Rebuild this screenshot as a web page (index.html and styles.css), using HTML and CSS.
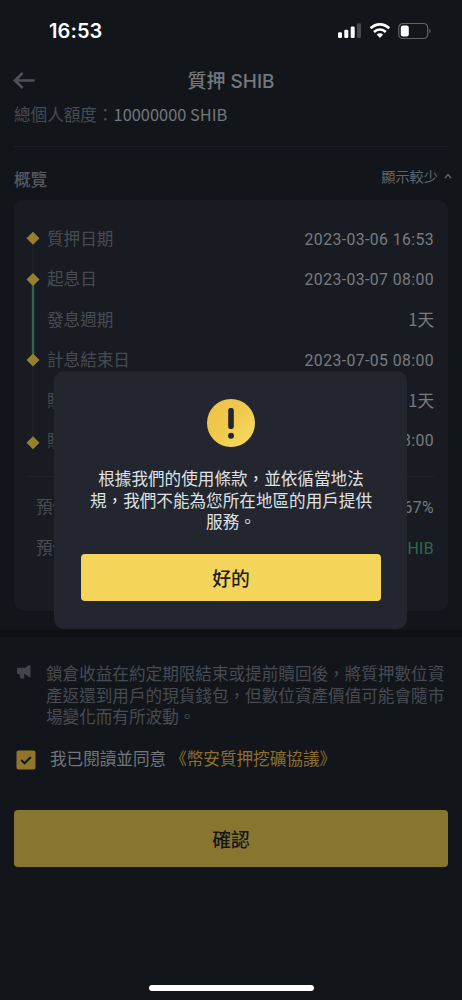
FILE: index.html
```html
<!DOCTYPE html>
<html lang="zh-Hant">
<head>
<meta charset="utf-8">
<meta name="viewport" content="width=device-width, initial-scale=1">
<title>質押 SHIB</title>
<link rel="stylesheet" href="styles.css">
</head>
<body>
<div class="screen">
  <div class="status-bar">
    <span class="clock">16:53</span>
    <svg class="status-icons" width="94" height="18" viewBox="0 0 94 18">
      <g fill="#fff">
        <rect x="1" y="10.300" width="4" height="5.700" rx="1.200"/>
        <rect x="7.300" y="7.800" width="4" height="8.200" rx="1.200"/>
        <rect x="13.700" y="4.600" width="4" height="11.400" rx="1.200"/>
        <rect x="20" y="1.300" width="4" height="14.700" rx="1.200" fill="#45484c"/>
      </g>
      <g fill="none" stroke="#fff" stroke-width="2.700">
        <path d="M33.600 6.200C39 1 46.800 1 52.200 6.200"/>
        <path d="M37 9.900C40.400 6.700 45.400 6.700 48.800 9.900"/>
      </g>
      <path d="M39.700 12.400C41.600 10.900 44.200 10.900 46.100 12.400L42.900 16Z" fill="#fff"/>
      <rect x="61.700" y="1.500" width="29" height="15" rx="4.300" fill="none" stroke="#606367" stroke-width="1.200"/>
      <rect x="63.800" y="3.500" width="8" height="11" rx="2.300" fill="#fff"/>
      <path d="M92.300 6.700C94 7.500 94 10.500 92.300 11.300Z" fill="#606367"/>
    </svg>
  </div>

  <div class="nav">
    <svg class="back" width="24" height="20" viewBox="0 0 24 20" fill="none" stroke="#4e5157" stroke-width="2.600">
      <path d="M22.500 9.500H3M10.600 2L3 9.500L10.600 17"/>
    </svg>
    <h1 class="title">質押 SHIB</h1>
  </div>

  <div class="quota">總個人額度：<span class="quota-value">10000000 SHIB</span></div>

  <div class="overview-head">
    <span class="overview-title">概覽</span>
    <span class="toggle">顯示較少
      <svg width="8" height="6" viewBox="0 0 8 6" fill="none" stroke="#62656a" stroke-width="1.300"><path d="M1 5L4 1.500L7 5"/></svg>
    </span>
  </div>

  <div class="card">
    <div class="timeline-wrap">
      <svg class="timeline" width="14" height="243" viewBox="0 0 14 243">
        <path d="M7 20V225" stroke="#1f232a" stroke-width="1.500"/>
        <path d="M7 61V142" stroke="#2e6450" stroke-width="2.400"/>
        <g fill="#95802f">
          <path d="M7 13.700L13.500 20.200L7 26.700L.5 20.200Z"/>
          <path d="M7 55L13.500 61.500L7 68L.5 61.500Z"/>
          <path d="M7 135.600L13.500 142.100L7 148.600L.5 142.100Z"/>
          <path d="M7 218.300L13.500 224.800L7 231.300L.5 224.800Z"/>
        </g>
      </svg>
      <div class="rows">
        <div class="row"><span>質押日期</span><span class="value num">2023-03-06 16:53</span></div>
        <div class="row"><span>起息日</span><span class="value num">2023-03-07 08:00</span></div>
        <div class="row"><span>發息週期</span><span class="value">1天</span></div>
        <div class="row"><span>計息結束日</span><span class="value num">2023-07-05 08:00</span></div>
        <div class="row"><span>贖回週期</span><span class="value">1天</span></div>
        <div class="row"><span>贖回日</span><span class="value num">2023-07-06 08:00</span></div>
      </div>
    </div>
    <div class="estimate">
      <div class="row"><span>預估年利率</span><span class="value num">7.67%</span></div>
      <div class="row"><span>預估利息</span><span class="value num green">SHIB</span></div>
    </div>
  </div>

  <div class="band"></div>

  <div class="notice">
    <svg class="horn" width="14" height="14" viewBox="0 0 14 14" fill="#41444b">
      <path d="M0 2.800H8L12 .3H13.500V12H12L8.300 9.300H7.200V13.500H3.200L2.400 9H0Z"/>
    </svg>
    <p>鎖倉收益在約定期限結束或提前贖回後，將質押數位資<br>產返還到用戶的現貨錢包，但數位資產價值可能會隨市<br>場變化而有所波動。</p>
  </div>

  <div class="agree">
    <svg class="check" width="20" height="20" viewBox="0 0 20 20">
      <rect x=".5" y=".5" width="19" height="19" rx="2" fill="#91752b"/>
      <path d="M5.200 10L8.600 13.200L14.800 7" fill="none" stroke="#15171a" stroke-width="2.100"/>
    </svg>
    <span>我已閱讀並同意</span><span class="link">《幣安質押挖礦協議》</span>
  </div>

  <button class="confirm">確認</button>
  <div class="home-indicator"></div>

  <div class="modal">
    <svg class="alert" width="48" height="48" viewBox="0 0 48 48">
      <defs><linearGradient id="gold" x1="0" y1="0" x2="1" y2="1"><stop offset="0" stop-color="#efc04a"/><stop offset=".5" stop-color="#efca4d"/><stop offset="1" stop-color="#f7dd62"/></linearGradient></defs>
      <circle cx="24" cy="24" r="24" fill="url(#gold)"/>
      <rect x="21.200" y="9" width="5.600" height="21" rx="2.200" fill="#22252b"/>
      <circle cx="24" cy="36.700" r="3" fill="#22252b"/>
    </svg>
    <p class="message">根據我們的使用條款，並依循當地法<br>規，我們不能為您所在地區的用戶提供<br>服務。</p>
    <button class="ok">好的</button>
  </div>
</div>
</body>
</html>
```
FILE: styles.css
```css
* { box-sizing: border-box; }
body { margin: 0; background: #12161b; }
p, h1 { margin: 0; }
svg { display: block; flex: none; }
button { border: 0; padding: 0; font-family: inherit; }

.screen {
  position: relative;
  display: flex;
  flex-direction: column;
  width: 462px;
  height: 1000px;
  padding: 0 14px;
  overflow: hidden;
  background: #12161b;
  color: #484b52;
  font-family: "Noto Sans CJK TC", sans-serif;
  font-size: 16.6px;
  line-height: 24px;
}

.status-bar {
  display: flex;
  justify-content: space-between;
  align-items: center;
  height: 62px;
  padding: 0 16px 0 35px;
}
.clock {
  color: #fff;
  font: 600 20px/24px Inter, sans-serif;
  letter-spacing: 0.1px;
}
.status-icons { margin-right: 1px; }

.nav {
  display: flex;
  align-items: center;
  height: 38px;
}
.back { margin-left: -2px; }
.title {
  flex: 1;
  margin-right: 22px;
  padding-top: 2px;
  text-align: center;
  color: #74777b;
  font-size: 19px;
  font-weight: 500;
  line-height: 38px;
  font-family: Inter, "Noto Sans CJK TC", sans-serif;
}

.quota {
  height: 47px;
  padding-top: 2px;
  border-bottom: 1px solid #1a1e25;
}
.quota-value {
  color: #74777b;
  font-size: 16.4px;
}

.overview-head {
  display: flex;
  justify-content: space-between;
  height: 53px;
  padding-top: 20px;
}
.overview-title { color: #55585e; font-weight: 500; }
.toggle {
  display: flex;
  align-items: center;
  gap: 6px;
  height: 17px;
  margin-right: -4px;
  color: #62656a;
  font-size: 14.2px;
}

.card {
  height: 411px;
  padding: 18px 14px 0;
  border-radius: 10px;
  background: #181b22;
}
.timeline-wrap { display: flex; gap: 8px; height: 259px; border-bottom: 1px solid #1f232a; }
.timeline { margin-left: -2px; }
.rows { flex: 1; margin-left: -1px; }
.row {
  display: flex;
  justify-content: space-between;
  height: 40.4px;
  line-height: 40.4px;
}
.value { color: #787b7f; }
.num {
  padding-top: 1.5px;
  font-family: Roboto, sans-serif;
  font-size: 15.8px;
  letter-spacing: 0.4px;
}
.estimate { padding: 9px 0 0 8px; }
.estimate .row + .row { padding-top: 1px; }
.green { color: #2e6b4d; }

.band { height: 7px; margin: 19px -14px 0; background: #0e1014; }

.notice {
  display: flex;
  gap: 15px;
  padding: 26px 0 0 3px;
  line-height: 21.5px;
}
.notice p { flex: none; white-space: nowrap; }
.horn { margin-top: 2px; }

.agree {
  display: flex;
  align-items: center;
  margin-top: 18px;
  padding-left: 2px;
  color: #73767a;
}
.check { margin: 4px 14px 0 0; }
.link { margin-left: 4px; color: #8c6f2c; }

.confirm {
  flex: none;
  height: 57px;
  margin-top: 40px;
  border-radius: 4px;
  background: #887530;
  color: #15171a;
  font-size: 18.8px;
  font-weight: 500;
}
.home-indicator {
  width: 165px;
  height: 6px;
  margin: auto auto 9px;
  border-radius: 3px;
  background: #fff;
}

.modal {
  position: absolute;
  top: 371px;
  left: 54px;
  display: flex;
  flex-direction: column;
  align-items: center;
  width: 353px;
  height: 258px;
  padding: 28px 26px 0 27px;
  border-radius: 10px;
  background: #23262e;
}
.message {
  margin-top: 21px;
  color: #dfe1e5;
  line-height: 21.5px;
  text-align: center;
  white-space: nowrap;
}
.ok {
  width: 100%;
  height: 47px;
  margin-top: 21px;
  border-radius: 4px;
  background: #f4d55a;
  color: #1c1e22;
  font-size: 18.8px;
  font-weight: 500;
}
```
